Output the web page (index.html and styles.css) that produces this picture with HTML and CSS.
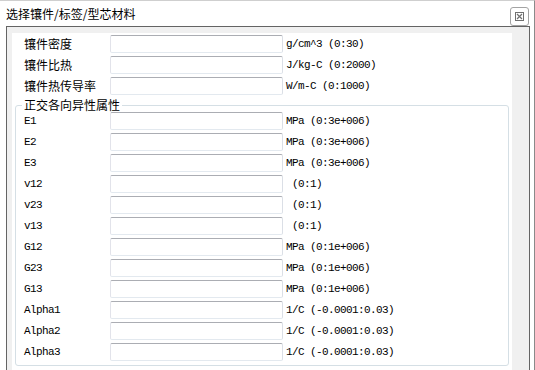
FILE: index.html
```html
<!DOCTYPE html>
<html lang="zh-CN">
<head>
    <meta charset="UTF-8">
    <title>选择镶件/标签/型芯材料</title>
    <link rel="stylesheet" href="styles.css">
</head>
<body>
    <div class="window">
        <div class="titlebar">
            <span class="title">选择镶件/标签/型芯材料</span>
            <button class="close" title="关闭">
                <svg width="9" height="9" viewBox="0 0 9 9">
                    <rect x="0.5" y="0.5" width="8" height="8" fill="none" stroke="#707070"/>
                    <path d="M2 2 L7 7 M7 2 L2 7" stroke="#707070" stroke-width="1.2"/>
                </svg>
            </button>
        </div>
        <div class="frame">
            <div class="scroll">
                <div class="row">
                    <span class="label">镶件密度</span>
                    <input class="field" type="text">
                    <span class="unit">g/cm^3 (0:30)</span>
                </div>
                <div class="row">
                    <span class="label">镶件比热</span>
                    <input class="field" type="text">
                    <span class="unit">J/kg-C (0:2000)</span>
                </div>
                <div class="row">
                    <span class="label">镶件热传导率</span>
                    <input class="field" type="text">
                    <span class="unit">W/m-C (0:1000)</span>
                </div>
                <fieldset class="group">
                    <legend>正交各向异性属性</legend>
                    <div class="row">
                        <span class="label latin">E1</span>
                        <input class="field" type="text">
                        <span class="unit">MPa (0:3e+006)</span>
                    </div>
                    <div class="row">
                        <span class="label latin">E2</span>
                        <input class="field" type="text">
                        <span class="unit">MPa (0:3e+006)</span>
                    </div>
                    <div class="row">
                        <span class="label latin">E3</span>
                        <input class="field" type="text">
                        <span class="unit">MPa (0:3e+006)</span>
                    </div>
                    <div class="row">
                        <span class="label latin">v12</span>
                        <input class="field" type="text">
                        <span class="unit"> (0:1)</span>
                    </div>
                    <div class="row">
                        <span class="label latin">v23</span>
                        <input class="field" type="text">
                        <span class="unit"> (0:1)</span>
                    </div>
                    <div class="row">
                        <span class="label latin">v13</span>
                        <input class="field" type="text">
                        <span class="unit"> (0:1)</span>
                    </div>
                    <div class="row">
                        <span class="label latin">G12</span>
                        <input class="field" type="text">
                        <span class="unit">MPa (0:1e+006)</span>
                    </div>
                    <div class="row">
                        <span class="label latin">G23</span>
                        <input class="field" type="text">
                        <span class="unit">MPa (0:1e+006)</span>
                    </div>
                    <div class="row">
                        <span class="label latin">G13</span>
                        <input class="field" type="text">
                        <span class="unit">MPa (0:1e+006)</span>
                    </div>
                    <div class="row">
                        <span class="label latin">Alpha1</span>
                        <input class="field" type="text">
                        <span class="unit">1/C (-0.0001:0.03)</span>
                    </div>
                    <div class="row">
                        <span class="label latin">Alpha2</span>
                        <input class="field" type="text">
                        <span class="unit">1/C (-0.0001:0.03)</span>
                    </div>
                    <div class="row">
                        <span class="label latin">Alpha3</span>
                        <input class="field" type="text">
                        <span class="unit">1/C (-0.0001:0.03)</span>
                    </div>
                </fieldset>
            </div>
        </div>
    </div>
</body>
</html>
```

FILE: styles.css
```css
html, body {
    margin: 0;
    padding: 0;
    background-color: #fff;
    overflow: hidden;
}
body {
    font-family: 'Noto Sans CJK SC', sans-serif;
    font-size: 12px;
    color: #000;
}
.window {
    width: 535px;
    height: 370px;
    box-sizing: border-box;
    border-top: 1px solid #cfcfcf;
    border-right: 1px solid #8a8a8a;
    display: flex;
    flex-direction: column;
}
.titlebar {
    height: 25px;
    display: flex;
    align-items: center;
    justify-content: space-between;
    padding: 0 5px 0 6px;
}
.title {
    font-size: 12px;
    line-height: 16px;
}
.close {
    width: 19px;
    height: 19px;
    margin-top: 5px;
    padding: 0;
    border: 1px solid #a3a3a3;
    border-radius: 3px;
    background-color: #fff;
    display: flex;
    align-items: center;
    justify-content: center;
}
.frame {
    flex: 1;
    margin: 0 4px 0 6px;
    border: 1px solid #646464;
    border-bottom: none;
    background-color: #f0f0f0;
    padding: 6px 17px 0 5px;
    display: flex;
}
.scroll {
    flex: 1;
    background-color: #fff;
    padding: 2px 3px 0 3px;
}
.row {
    height: 21px;
    display: flex;
    align-items: flex-start;
    padding-left: 9px;
}
.group .row {
    padding-left: 0;
}
.label {
    width: 86px;
    height: 18px;
    line-height: 18px;
    flex-shrink: 0;
}
.label.latin,
.unit {
    font-family: 'Liberation Mono', monospace;
    font-size: 11px;
    letter-spacing: -0.6px;
}
.field {
    width: 173px;
    height: 18px;
    box-sizing: border-box;
    margin: 0;
    padding: 0 3px;
    border: 1px solid;
    border-color: #abadb3 #dbdfe6 #e3e9ef #e2e3ea;
    border-radius: 2px;
    background-color: #fff;
    outline: none;
}
.unit {
    margin-left: 3px;
    line-height: 18px;
    white-space: pre;
}
.group {
    margin: 0;
    padding: 0 0 1px 8px;
    border: 1px solid #d5dfe5;
    border-radius: 3px;
}
.group legend {
    margin-left: -2px;
    padding: 0 2px;
    font-size: 12px;
    line-height: 14px;
}
```
